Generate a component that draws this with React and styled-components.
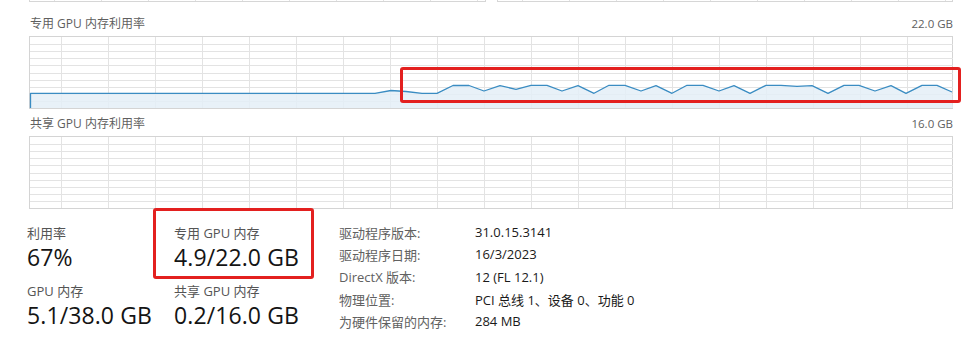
import React from "react";
import styled, { createGlobalStyle } from "styled-components";

const Global = createGlobalStyle`
  html, body { margin: 0; padding: 0; background: #ffffff; }
  body { font-family: "Open Sans", "Noto Sans CJK SC", sans-serif; }
`;

const FONT = `"Open Sans", "Noto Sans CJK SC", sans-serif`;

const Root = styled.div`
  position: relative;
  width: 975px;
  height: 337px;
  box-sizing: border-box;
  padding: 0 22px 0 29px;
  background: #fff;
  overflow: hidden;
  font-family: ${FONT};
`;

const TopStrip = styled.div`
  display: flex;
  gap: 11px;
  height: 2px;
`;

const MiniChart = styled.div`
  flex: 1;
  height: 1px;
  border: 1px solid #d6d6d6;
  border-top: none;
  background-image: repeating-linear-gradient(
    to right,
    transparent 0,
    transparent 24px,
    #e2e2e2 24px,
    #e2e2e2 25px,
    transparent 25px,
    transparent 47px
  );
`;

const Section = styled.section`
  margin-top: ${(p) => p.$top}px;
`;

const ChartHeader = styled.div`
  display: flex;
  justify-content: space-between;
  align-items: center;
  height: 15px;
  line-height: 15px;
  margin-bottom: 5px;
  padding: 0 0 0 1px;
  font-size: 12px;
  color: #5f5f5f;
`;

const Capacity = styled.span`
  font-size: 11.5px;
  color: #606060;
`;

const ChartBox = styled.div`
  height: 73px;
  box-sizing: border-box;
  border: 1px solid #d4d4d4;
  background: #fff;
`;

const ChartSvg = styled.svg`
  display: block;
  overflow: visible;
`;

const StatsArea = styled.div`
  display: flex;
  margin-top: 12px;
`;

const StatsGrid = styled.div`
  display: grid;
  grid-template-columns: 147px 165px;
  row-gap: 8px;
  margin-left: -2px;
  padding-top: 3px;
`;

const Stat = styled.div`
  display: flex;
  flex-direction: column;
`;

const StatLabel = styled.div`
  height: 18px;
  line-height: 18px;
  font-size: 13px;
  color: #555;
`;

const StatValue = styled.div`
  height: 31px;
  line-height: 31px;
  font-size: 23px;
  color: #141414;
  letter-spacing: 0.1px;
`;

const InfoGrid = styled.div`
  display: grid;
  grid-template-columns: 136px auto;
  grid-auto-rows: 22.3px;
  align-items: center;
  font-size: 13px;
`;

const InfoLabel = styled.div`
  color: #616161;
  white-space: nowrap;
`;

const InfoValue = styled.div`
  color: #1a1a1a;
  white-space: nowrap;
`;

const RedFrame = styled.div`
  position: absolute;
  left: ${(p) => p.$x}px;
  top: ${(p) => p.$y}px;
  width: ${(p) => p.$w}px;
  height: ${(p) => p.$h}px;
  box-sizing: border-box;
  border: 3px solid #e3201f;
  border-radius: 3px;
  pointer-events: none;
`;

const W = 923;
const H = 71;

function Grid() {
  const v = [];
  for (let k = 0; k <= 18; k++) v.push(31 + 47 * k);
  const h = [];
  for (let j = 1; j <= 9; j++) h.push(+(j * 7.1).toFixed(1));
  return (
    <g stroke="#e3e3e3" strokeWidth="1">
      {v.map((x) => (
        <line key={"v" + x} x1={x + 0.5} y1="0" x2={x + 0.5} y2={H} />
      ))}
      {h.map((y) => (
        <line key={"h" + y} x1="0" y1={Math.round(y) + 0.5} x2={W} y2={Math.round(y) + 0.5} />
      ))}
    </g>
  );
}

const pts = [
  [0.5, 56.3], [345, 56.3], [361, 53.5], [376, 54.5], [392, 56.3], [407, 56.3],
  [423, 48.5], [439, 48.5], [454, 54], [470, 48.7], [486, 52.3], [501, 48.3],
  [517, 48.3], [532, 54], [548, 48.7], [564, 56.3], [579, 48.3], [595, 48.3],
  [611, 54], [626, 48.7], [642, 56.3], [657, 48.3], [673, 48.3], [689, 54],
  [704, 48.7], [720, 56.3], [736, 48.3], [751, 48.3], [767, 49.3], [782, 48.7],
  [798, 56.3], [814, 48.3], [829, 48.3], [845, 54], [861, 48.7], [876, 56.3],
  [892, 48.3], [907, 48.3], [922, 55],
];

function UsageChart({ data }) {
  return (
    <ChartSvg width={W} height={H} viewBox={`0 0 ${W} ${H}`}>
      <Grid />
      {data && (
        <>
          <polygon
            points={`0.5,${H} ` + data.map((p) => p.join(",")).join(" ") + ` ${W},${H}`}
            fill="#e4eef7"
            fillOpacity="0.85"
          />
          <polyline
            points={`0.5,${H} ` + data.map((p) => p.join(",")).join(" ")}
            fill="none"
            stroke="#3a8cc2"
            strokeWidth="1.3"
            strokeLinejoin="round"
          />
        </>
      )}
    </ChartSvg>
  );
}

const stats = [
  { label: "利用率", value: "67%" },
  { label: "专用 GPU 内存", value: "4.9/22.0 GB" },
  { label: "GPU 内存", value: "5.1/38.0 GB" },
  { label: "共享 GPU 内存", value: "0.2/16.0 GB" },
];

const info = [
  ["驱动程序版本:", "31.0.15.3141"],
  ["驱动程序日期:", "16/3/2023"],
  ["DirectX 版本:", "12 (FL 12.1)"],
  ["物理位置:", "PCI 总线 1、设备 0、功能 0"],
  ["为硬件保留的内存:", "284 MB"],
];

export default function App() {
  return (
    <>
      <Global />
      <Root>
        <TopStrip>
          <MiniChart />
          <MiniChart />
        </TopStrip>

        <Section $top={14}>
          <ChartHeader>
            <span>专用 GPU 内存利用率</span>
            <Capacity>22.0 GB</Capacity>
          </ChartHeader>
          <ChartBox>
            <UsageChart data={pts} />
          </ChartBox>
        </Section>

        <Section $top={7}>
          <ChartHeader>
            <span>共享 GPU 内存利用率</span>
            <Capacity>16.0 GB</Capacity>
          </ChartHeader>
          <ChartBox>
            <UsageChart />
          </ChartBox>
        </Section>

        <StatsArea>
          <StatsGrid>
            {stats.map((s) => (
              <Stat key={s.label}>
                <StatLabel>{s.label}</StatLabel>
                <StatValue>{s.value}</StatValue>
              </Stat>
            ))}
          </StatsGrid>
          <InfoGrid>
            {info.map(([k, v]) => (
              <React.Fragment key={k}>
                <InfoLabel>{k}</InfoLabel>
                <InfoValue>{v}</InfoValue>
              </React.Fragment>
            ))}
          </InfoGrid>
        </StatsArea>

        <RedFrame $x={400} $y={67} $w={561} $h={36} />
        <RedFrame $x={153} $y={208} $w={161} $h={71} />
      </Root>
    </>
  );
}
